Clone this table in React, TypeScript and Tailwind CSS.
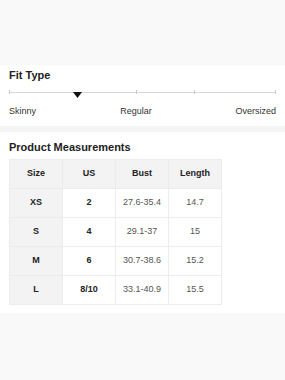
import React from "react";

const rows = [
  ["XS", "2", "27.6-35.4", "14.7"],
  ["S", "4", "29.1-37", "15"],
  ["M", "6", "30.7-38.6", "15.2"],
  ["L", "8/10", "33.1-40.9", "15.5"],
];

export default function App() {
  return (
    <div className="w-[285px] h-[380px] bg-[#f7f7f7] flex flex-col" style={{ fontFamily: '"Liberation Sans", Arial, sans-serif' }}>
      <div className="h-[65px] bg-[#f9f9f9]" />
      <div className="bg-white h-[61px] px-[9px] pt-[4px] flex flex-col">
        <div className="text-[11px] font-bold text-[#222] leading-[13px]">Fit Type</div>
        <div className="relative mt-[8px] flex h-[4px] border-r border-[#c8c8c8]">
          <div className="w-[127px] border-l border-[#c8c8c8] flex items-center"><div className="h-px w-full bg-[#d8d8d8]" /></div>
          <div className="w-[58px] border-l border-[#c8c8c8] flex items-center"><div className="h-px w-full bg-[#d8d8d8]" /></div>
          <div className="flex-1 border-l border-[#c8c8c8] flex items-center"><div className="h-px w-full bg-[#d8d8d8]" /></div>
          <svg className="absolute left-[64px] top-[2px]" width="9" height="6" viewBox="0 0 9 6">
            <polygon points="0,0 9,0 4.5,6" fill="#111" />
          </svg>
        </div>
        <div className="mt-[11px] flex text-[9px] text-[#333] leading-[12px]">
          <div className="w-[111px]">Skinny</div>
          <div className="w-[32px] text-center">Regular</div>
          <div className="flex-1 text-right">Oversized</div>
        </div>
      </div>
      <div className="h-[6px] bg-[#f5f5f5]" />
      <div className="bg-white h-[181px] px-[9px] pt-[9px]">
        <div className="text-[11px] font-bold text-[#222] leading-[13px]">Product Measurements</div>
        <table className="mt-[5px] border-collapse text-[9px] text-center">
          <thead>
            <tr className="bg-[#f3f3f3] h-[29px]">
              {["Size", "US", "Bust", "Length"].map((h) => (
                <th key={h} className="w-[53px] border border-[#ececec] font-bold text-[#222]">{h}</th>
              ))}
            </tr>
          </thead>
          <tbody>
            {rows.map((r) => (
              <tr key={r[0]} className="h-[29px]">
                <td className="border border-[#ececec] bg-[#f3f3f3] font-bold text-[#222]">{r[0]}</td>
                <td className="border border-[#ececec] font-bold text-[#222]">{r[1]}</td>
                <td className="border border-[#ececec] text-[#555]">{r[2]}</td>
                <td className="border border-[#ececec] text-[#555]">{r[3]}</td>
              </tr>
            ))}
          </tbody>
        </table>
      </div>
      <div className="flex-1 bg-[#f9f9f9]" />
    </div>
  );
}
